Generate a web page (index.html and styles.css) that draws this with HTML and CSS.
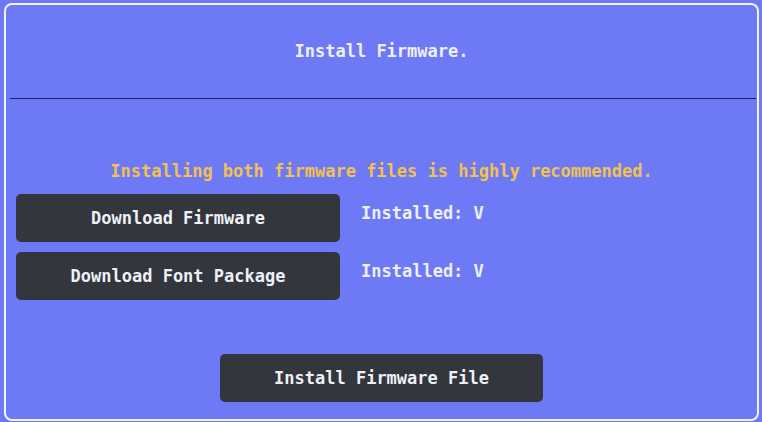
FILE: index.html
```html
<!DOCTYPE html>
<html lang="en">
<head>
    <meta charset="UTF-8">
    <meta name="viewport" content="width=device-width, initial-scale=1.0">
    <title>Install Firmware</title>
    <link rel="stylesheet" href="styles.css">
</head>
<body>
    <div class="panel">
        <div class="header">
            <h1 class="title">Install Firmware.</h1>
        </div>
        <div class="divider"></div>

        <div class="content">
            <p class="notice">Installing both firmware files is highly recommended.</p>

            <div class="row">
                <button class="btn btn-wide">Download Firmware</button>
                <span class="status">Installed: V</span>
            </div>
            <div class="row">
                <button class="btn btn-wide">Download Font Package</button>
                <span class="status">Installed: V</span>
            </div>

            <div class="footer">
                <button class="btn btn-wide">Install Firmware File</button>
            </div>
        </div>
    </div>
</body>
</html>
```

FILE: styles.css
```css
body {
    margin: 0;
    background-color: #6e7af5;
    font-family: "DejaVu Sans Mono", "Liberation Mono", monospace;
    font-weight: bold;
    font-size: 17px;
    color: #eef0f8;
}
.panel {
    box-sizing: border-box;
    width: 755px;
    height: 418px;
    margin: 3px 0 0 4px;
    border: 2px solid #f4f5fb;
    border-radius: 8px;
}
.header {
    height: 92px;
    padding-bottom: 1px;
    display: flex;
    justify-content: center;
    align-items: center;
}
.title {
    margin: 0;
    font-size: 17px;
    line-height: 20px;
    font-weight: bold;
}
.divider {
    height: 1px;
    margin: 0 1px 0 4px;
    background-color: #1b1f5e;
}
.content {
    padding: 62px 0 0 10px;
}
.notice {
    margin: 0 0 13px -10px;
    text-align: center;
    line-height: 20px;
    color: #f2c14e;
}
.row {
    display: flex;
    align-items: flex-start;
    gap: 21px;
    margin-bottom: 10px;
}
.btn {
    height: 48px;
    border: none;
    border-radius: 5px;
    background-color: #33363c;
    color: #eef0f8;
    font-family: inherit;
    font-weight: bold;
    font-size: 17px;
    cursor: pointer;
}
.btn-wide {
    width: 324px;
}
.status {
    padding-top: 9px;
    line-height: 20px;
}
.footer {
    display: flex;
    justify-content: center;
    margin: 54px 0 0 -10px;
}
.footer .btn {
    width: 323px;
}
```
